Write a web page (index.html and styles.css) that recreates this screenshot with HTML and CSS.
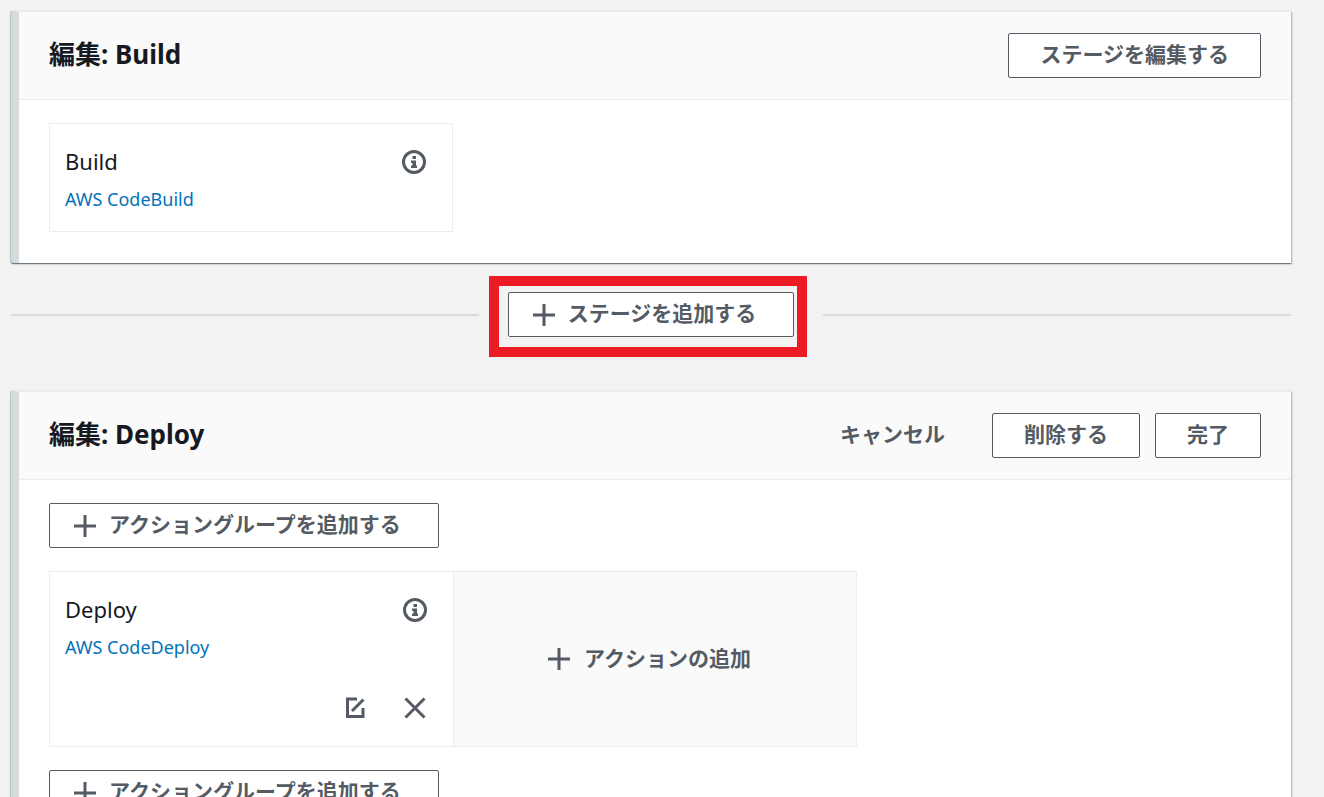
FILE: index.html
```html
<!DOCTYPE html>
<html lang="ja">
<head>
<meta charset="utf-8">
<title>パイプラインの編集</title>
<link rel="stylesheet" href="styles.css">
</head>
<body>
<svg class="symbols" aria-hidden="true">
  <symbol id="plus" viewBox="0 0 24 24"><path d="M12 1v22M1 12h22" stroke="currentColor" stroke-width="3"/></symbol>
  <symbol id="info" viewBox="0 0 24 24"><circle cx="12" cy="12" r="10.5" fill="none" stroke="currentColor" stroke-width="3"/><path d="M10.500 6h3.500v3h-3.500zM9 10.500h5v5h1v2.500H9v-2.500h1.500v-2.500H9z" fill="currentColor"/></symbol>
  <symbol id="edit" viewBox="0 0 24 24"><path d="M14 3H4.500v17.500h15.500V12M20.500 3.500L9 15" fill="none" stroke="currentColor" stroke-width="3"/></symbol>
  <symbol id="close" viewBox="0 0 24 24"><path d="M2.500 2.500l19 19M21.500 2.500l-19 19" stroke="currentColor" stroke-width="3"/></symbol>
</svg>
<main class="pipeline">
  <section class="stage">
    <header class="stage-header">
      <h2 class="stage-title">編集: Build</h2>
      <button class="button" type="button">ステージを編集する</button>
    </header>
    <div class="stage-body">
      <div class="actions">
        <article class="action">
          <div class="action-top">
            <h3 class="action-name">Build</h3>
            <button class="icon-button" type="button" aria-label="情報"><svg class="icon"><use href="#info"/></svg></button>
          </div>
          <a class="action-link" href="#">AWS CodeBuild</a>
        </article>
      </div>
    </div>
  </section>

  <div class="divider">
    <span class="line"></span>
    <div class="divider-action">
      <button class="button with-icon" type="button"><svg class="icon"><use href="#plus"/></svg><span class="label">ステージを追加する</span></button>
      <span class="highlight"></span>
    </div>
    <span class="line"></span>
  </div>

  <section class="stage">
    <header class="stage-header">
      <h2 class="stage-title">編集: Deploy</h2>
      <div class="button-row">
        <button class="button plain" type="button">キャンセル</button>
        <button class="button" type="button">削除する</button>
        <button class="button" type="button">完了</button>
      </div>
    </header>
    <div class="stage-body">
      <button class="button with-icon" type="button"><svg class="icon"><use href="#plus"/></svg><span class="label">アクショングループを追加する</span></button>
      <div class="actions">
        <article class="action editable">
          <div class="action-top">
            <h3 class="action-name">Deploy</h3>
            <button class="icon-button" type="button" aria-label="情報"><svg class="icon"><use href="#info"/></svg></button>
          </div>
          <a class="action-link" href="#">AWS CodeDeploy</a>
          <div class="action-tools">
            <button class="icon-button" type="button" aria-label="編集"><svg class="icon"><use href="#edit"/></svg></button>
            <button class="icon-button" type="button" aria-label="削除"><svg class="icon"><use href="#close"/></svg></button>
          </div>
        </article>
        <button class="add-action" type="button"><svg class="icon"><use href="#plus"/></svg><span class="label">アクションの追加</span></button>
      </div>
      <button class="button with-icon" type="button"><svg class="icon"><use href="#plus"/></svg><span class="label">アクショングループを追加する</span></button>
    </div>
  </section>
</main>
</body>
</html>
```
FILE: styles.css
```css
* { box-sizing: border-box; }

body {
  margin: 0;
  height: 100vh;
  overflow: hidden;
  background: #f2f2f2;
  color: #16191f;
  font-family: "Noto Sans", "Noto Sans CJK JP", sans-serif;
}

.symbols { display: none; }

.pipeline { padding: 11px 33px 30px 11px; }

.stage {
  background: #fff;
  border-top: 1px solid #eaeded;
  border-left: 8px solid #d5dbde;
  border-radius: 2px 0 0 2px;
  box-shadow: 0 1px 1px #687078, 1px 1px 2px #aab7b8, -1px 0 1px #c3cbcb;
}

.stage-header {
  display: flex;
  align-items: center;
  justify-content: space-between;
  min-height: 88px;
  padding: 0 30px;
  background: #fafafa;
  border-bottom: 1px solid #eaeded;
}

.stage-title {
  margin: 0;
  padding-bottom: 4px;
  font-size: 26px;
  line-height: 36px;
  font-weight: 700;
}

.stage-body {
  display: flex;
  flex-direction: column;
  align-items: flex-start;
  gap: 23px;
  padding: 23px 30px 31px;
}

.button {
  height: 45px;
  padding: 0 31px 4px;
  border: 1px solid #545b64;
  border-radius: 2px;
  background: #fff;
  color: #545b64;
  font-family: inherit;
  font-size: 21px;
  line-height: 32px;
  font-weight: 700;
  white-space: nowrap;
}

.plain {
  border-color: transparent;
  background: transparent;
}

.with-icon {
  display: flex;
  align-items: center;
  gap: 12px;
  padding: 0 37px 0 23px;
}

.label { padding-bottom: 3px; }

.icon {
  display: block;
  width: 24px;
  height: 24px;
  flex: none;
}

.button-row { display: flex; gap: 15px; }

.actions {
  display: flex;
  width: 808px;
  max-width: 100%;
}

.action {
  width: 50%;
  min-height: 109px;
  padding: 20px 26px 15px 15px;
  border: 1px solid #eaeded;
}

.editable {
  display: flex;
  flex-direction: column;
  align-items: flex-start;
  min-height: 176px;
  border-right: 0;
}

.action-top {
  display: flex;
  align-items: center;
  justify-content: space-between;
  width: 100%;
}

.action-name {
  margin: 0;
  padding-bottom: 2px;
  font-size: 22px;
  line-height: 34px;
  font-weight: 400;
}

.action-link {
  display: inline-block;
  margin-top: 5px;
  color: #0073bb;
  font-size: 18px;
  line-height: 28px;
  text-decoration: none;
}

.icon-button {
  padding: 0;
  border: 0;
  background: none;
  color: #545b64;
}

.action-tools {
  display: flex;
  align-self: flex-end;
  gap: 36px;
  margin-top: auto;
  padding-bottom: 11px;
}

.add-action {
  display: flex;
  align-items: center;
  justify-content: center;
  gap: 13px;
  width: 50%;
  padding: 0 12px 0 0;
  border: 1px solid #eaeded;
  background: #fafafa;
  color: #545b64;
  font-family: inherit;
  font-size: 21px;
  line-height: 32px;
  font-weight: 700;
}

.divider {
  display: flex;
  align-items: center;
  gap: 29px;
  padding: 29px 0 54px;
}

.line {
  flex: 1;
  height: 2px;
  background: #d5dbde;
}

.divider-action { position: relative; }

.highlight {
  position: absolute;
  inset: -16px -13px -20px -19px;
  border: 10px solid #ed1c24;
  pointer-events: none;
}
```
